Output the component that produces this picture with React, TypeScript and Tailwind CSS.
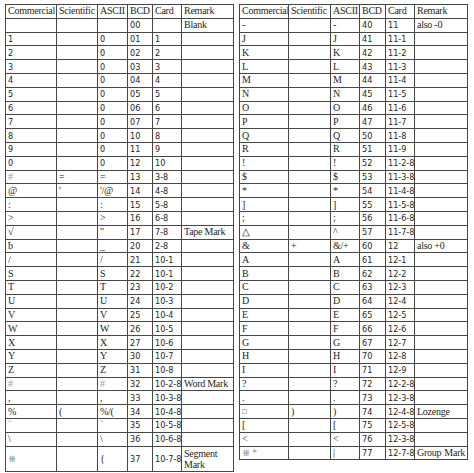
import React from "react";

type Row = { cells: string[]; tall?: boolean };

const HEAD = ["Commercial", "Scientific", "ASCII", "BCD", "Card", "Remark"];

const LEFT: Row[] = [
  { cells: ["", "", "", "00", "", "Blank"] },
  { cells: ["1", "", "0", "01", "1", ""] },
  { cells: ["2", "", "0", "02", "2", ""] },
  { cells: ["3", "", "0", "03", "3", ""] },
  { cells: ["4", "", "0", "04", "4", ""] },
  { cells: ["5", "", "0", "05", "5", ""] },
  { cells: ["6", "", "0", "06", "6", ""] },
  { cells: ["7", "", "0", "07", "7", ""] },
  { cells: ["8", "", "0", "10", "8", ""] },
  { cells: ["9", "", "0", "11", "9", ""] },
  { cells: ["0", "", "0", "12", "10", ""] },
  { cells: ["#", "=", "=", "13", "3-8", ""] },
  { cells: ["@", "'", "'/@", "14", "4-8", ""] },
  { cells: [":", "", ":", "15", "5-8", ""] },
  { cells: [">", "", ">", "16", "6-8", ""] },
  { cells: ["√", "", "\"", "17", "7-8", "Tape Mark"] },
  { cells: ["ƀ", "", "_", "20", "2-8", ""] },
  { cells: ["/", "", "/", "21", "10-1", ""] },
  { cells: ["S", "", "S", "22", "10-1", ""] },
  { cells: ["T", "", "T", "23", "10-2", ""] },
  { cells: ["U", "", "U", "24", "10-3", ""] },
  { cells: ["V", "", "V", "25", "10-4", ""] },
  { cells: ["W", "", "W", "26", "10-5", ""] },
  { cells: ["X", "", "X", "27", "10-6", ""] },
  { cells: ["Y", "", "Y", "30", "10-7", ""] },
  { cells: ["Z", "", "Z", "31", "10-8", ""] },
  { cells: ["#", "", "#", "32", "10-2-8", "Word Mark"] },
  { cells: [",", "", ",", "33", "10-3-8", ""] },
  { cells: ["%", "(", "%/(", "34", "10-4-8", ""] },
  { cells: ["ˆ", "", "ˆ", "35", "10-5-8", ""] },
  { cells: ["\\", "", "\\", "36", "10-6-8", ""] },
  { cells: ["⧻", "", "{", "37", "10-7-8", "Segment Mark"], tall: true },
];

const RIGHT: Row[] = [
  { cells: ["-", "", "-", "40", "11", "also -0"] },
  { cells: ["J", "", "J", "41", "11-1", ""] },
  { cells: ["K", "", "K", "42", "11-2", ""] },
  { cells: ["L", "", "L", "43", "11-3", ""] },
  { cells: ["M", "", "M", "44", "11-4", ""] },
  { cells: ["N", "", "N", "45", "11-5", ""] },
  { cells: ["O", "", "O", "46", "11-6", ""] },
  { cells: ["P", "", "P", "47", "11-7", ""] },
  { cells: ["Q", "", "Q", "50", "11-8", ""] },
  { cells: ["R", "", "R", "51", "11-9", ""] },
  { cells: ["!", "", "!", "52", "11-2-8", ""] },
  { cells: ["$", "", "$", "53", "11-3-8", ""] },
  { cells: ["*", "", "*", "54", "11-4-8", ""] },
  { cells: ["]", "", "]", "55", "11-5-8", ""] },
  { cells: [";", "", ";", "56", "11-6-8", ""] },
  { cells: ["△", "", "^", "57", "11-7-8", ""] },
  { cells: ["&", "+", "&/+", "60", "12", "also +0"] },
  { cells: ["A", "", "A", "61", "12-1", ""] },
  { cells: ["B", "", "B", "62", "12-2", ""] },
  { cells: ["C", "", "C", "63", "12-3", ""] },
  { cells: ["D", "", "D", "64", "12-4", ""] },
  { cells: ["E", "", "E", "65", "12-5", ""] },
  { cells: ["F", "", "F", "66", "12-6", ""] },
  { cells: ["G", "", "G", "67", "12-7", ""] },
  { cells: ["H", "", "H", "70", "12-8", ""] },
  { cells: ["I", "", "I", "71", "12-9", ""] },
  { cells: ["?", "", "?", "72", "12-2-8", ""] },
  { cells: [".", "", ".", "73", "12-3-8", ""] },
  { cells: ["⌑", ")", ")", "74", "12-4-8", "Lozenge"] },
  { cells: ["[", "", "[", "75", "12-5-8", ""] },
  { cells: ["<", "", "<", "76", "12-3-8", ""] },
  { cells: ["⧻ *", "", "|", "77", "12-7-8", "Group Mark"] },
];

const GREY = new Set(["⧻", "⧻ *", "#", "ˆ", "⌑"]);

const isNum = (s: string) => /^[0-9-]+$/.test(s) && s !== "-";

function Cell({ text, tall }: { text: string; tall?: boolean }) {
  const num = isNum(text);
  return (
    <td
      className={
        "border border-[#474747] p-0 pl-[2px] align-middle whitespace-nowrap overflow-hidden leading-[10px] " +
        (tall ? "h-[25px] " : "h-[13.8px] ") +
        (num
          ? "font-['DejaVu_Sans_Condensed','DejaVu_Sans',sans-serif] text-[9px] "
          : "font-['Liberation_Serif',serif] text-[10px] tracking-[-0.25px] ") +
        (GREY.has(text) ? "text-[#9a9a9a]" : "text-[#262626]")
      }
    >
      {text === "Segment Mark" ? (
        <span className="block whitespace-normal leading-[11px]">
          Segment
          <br />
          Mark
        </span>
      ) : text === "Group Mark" ? (
        <span className="flex justify-between pr-[2px]">
          <span>Group</span>
          <span>Mark</span>
        </span>
      ) : (
        text
      )}
    </td>
  );
}

function CodeTable({ rows, widths }: { rows: Row[]; widths: number[] }) {
  return (
    <table className="w-[228px] table-fixed border-collapse border border-[#3d3d3d] bg-white">
      <colgroup>
        {widths.map((w, i) => (
          <col key={i} style={{ width: w }} />
        ))}
      </colgroup>
      <thead>
        <tr>
          {HEAD.map(h => (
            <th
              key={h}
              className="border border-[#474747] p-0 pl-[2px] h-[13.8px] text-left font-normal font-['Liberation_Serif',serif] text-[10px] tracking-[-0.25px] leading-[10px] text-[#262626] whitespace-nowrap overflow-hidden"
            >
              {h}
            </th>
          ))}
        </tr>
      </thead>
      <tbody>
        {rows.map((r, i) => (
          <tr key={i}>
            {r.cells.map((c, j) => (
              <Cell key={j} text={c} tall={r.tall} />
            ))}
          </tr>
        ))}
      </tbody>
    </table>
  );
}

export default function App() {
  return (
    <div className="w-[474px] h-[473px] bg-white flex items-start gap-[5px] pl-[5px] pt-[4px]">
      <CodeTable rows={LEFT} widths={[51, 41, 30, 25, 29, 52]} />
      <CodeTable rows={RIGHT} widths={[49, 42, 29, 26, 29, 53]} />
    </div>
  );
}
